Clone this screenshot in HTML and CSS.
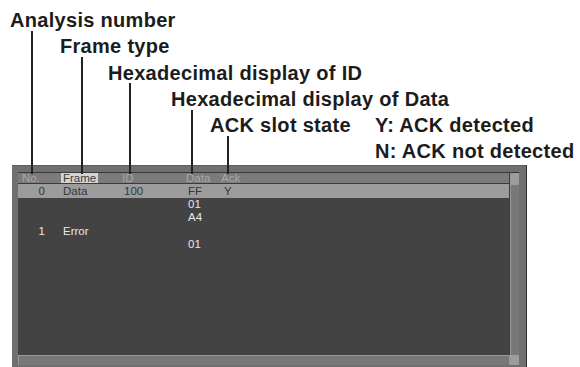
FILE: index.html
```html
<!DOCTYPE html>
<html lang="en">

<head>
    <meta charset="UTF-8">
    <title>Analysis list</title>
    <link rel="stylesheet" href="styles.css">
</head>

<body>
    <div class="figure">
        <div class="callouts">
            <div class="callout c1">Analysis number</div>
            <div class="callout c2">Frame type</div>
            <div class="callout c3">Hexadecimal display of ID</div>
            <div class="callout c4">Hexadecimal display of Data</div>
            <div class="callout c5"><span class="ack">ACK slot state</span><span>Y: ACK detected</span></div>
            <div class="callout c6">N: ACK not detected</div>
        </div>

        <div class="panel">
            <div class="list">
                <div class="head">
                    <span class="hno">No.</span>
                    <span><span class="hsel">Frame</span></span>
                    <span>ID</span>
                    <span>Data</span>
                    <span>Ack</span>
                </div>
                <div class="row sel">
                    <span class="no">0</span>
                    <span>Data</span>
                    <span>100</span>
                    <span>FF</span>
                    <span class="ackv">Y</span>
                </div>
                <div class="row">
                    <span class="no"></span>
                    <span></span>
                    <span></span>
                    <span>01</span>
                    <span></span>
                </div>
                <div class="row">
                    <span class="no"></span>
                    <span></span>
                    <span></span>
                    <span>A4</span>
                    <span></span>
                </div>
                <div class="row">
                    <span class="no">1</span>
                    <span>Error</span>
                    <span></span>
                    <span></span>
                    <span></span>
                </div>
                <div class="row">
                    <span class="no"></span>
                    <span></span>
                    <span></span>
                    <span>01</span>
                    <span></span>
                </div>
            </div>
            <div class="vbar">
                <div class="vbtn"></div>
                <div class="vtrack"></div>
            </div>
            <div class="hbar"></div>
            <div class="corner"></div>
        </div>

        <!-- leader lines from the callouts down to the column headers -->
        <div class="lead lead-no"></div>
        <div class="lead lead-frame"></div>
        <div class="lead lead-id"></div>
        <div class="lead lead-data"></div>
        <div class="lead lead-ack"></div>
    </div>
</body>

</html>
```

FILE: styles.css
```css
body {
    margin: 0;
    background-color: #ffffff;
}

.figure {
    position: relative;
    width: 580px;
    height: 367px;
    overflow: hidden;
}

.callouts {
    padding-top: 7px;
    font-family: "Liberation Sans", Arial, sans-serif;
    font-weight: bold;
    font-size: 20px;
    letter-spacing: 0.3px;
    line-height: 26.3px;
    color: #1c1c1c;
    white-space: nowrap;
}

.c1 { padding-left: 10px; }
.c2 { padding-left: 60px; }
.c3 { padding-left: 108px; }
.c4 { padding-left: 171px; }
.c5 { padding-left: 210px; display: flex; }
.c6 { padding-left: 375px; }

.ack {
    width: 165px;
}

.panel {
    box-sizing: border-box;
    margin-left: 12px;
    width: 515px;
    height: 215px;
    background-color: #707070;
    border-top: 1px solid #5e5e5e;
    border-right: 1px solid #2e2e2e;
    padding: 6px 7px 0 6px;
    display: grid;
    grid-template-columns: 1fr 10px;
    grid-template-rows: 183px 10px;
    font-family: "Liberation Sans", Arial, sans-serif;
    font-size: 11.5px;
}

.list {
    background-color: #434343;
    border-top: 1px solid #383838;
    overflow: hidden;
}

.head,
.row {
    display: grid;
    grid-template-columns: 43px 61px 64px 35px 1fr;
    white-space: nowrap;
}

.head {
    height: 10px;
    line-height: 10px;
    background-color: #7b7b7b;
    border-bottom: 1px solid #3a3a3a;
    color: #a9a9a9;
}

.hno {
    padding-left: 4px;
}

.hsel {
    display: inline-block;
    padding: 0 2px;
    background-color: #d4d4d4;
    color: #3c3c3c;
}

.row {
    height: 13.5px;
    line-height: 13.5px;
    color: #e8e8e8;
}

.row span {
    padding-left: 2px;
}

.row .no {
    text-align: right;
    padding-right: 16px;
}

.row .ackv {
    padding-left: 3px;
}

.row.sel {
    height: 14px;
    line-height: 14px;
    background-color: #9c9c9c;
    color: #363636;
}

.vbar {
    display: flex;
    flex-direction: column;
    border-top: 1px solid #383838;
    border-left: 1px solid #3a3a3a;
}

.vbtn {
    height: 12px;
    background-color: #9c9c9c;
}

.vtrack {
    flex: 1;
    background-color: #787878;
    border-left: 1px solid #9a9a9a;
}

.hbar {
    background-color: #787878;
    border-top: 1px solid #9a9a9a;
    border-left: 1px solid #9a9a9a;
}

.corner {
    background-color: #9c9c9c;
}

.lead {
    position: absolute;
    width: 2px;
    background-color: #222222;
}

.lead-no { left: 31px; top: 31px; height: 143px; }
.lead-frame { left: 81px; top: 57px; height: 117px; }
.lead-id { left: 129px; top: 83px; height: 91px; }
.lead-data { left: 191px; top: 110px; height: 64px; }
.lead-ack { left: 227px; top: 136px; height: 38px; }
```
